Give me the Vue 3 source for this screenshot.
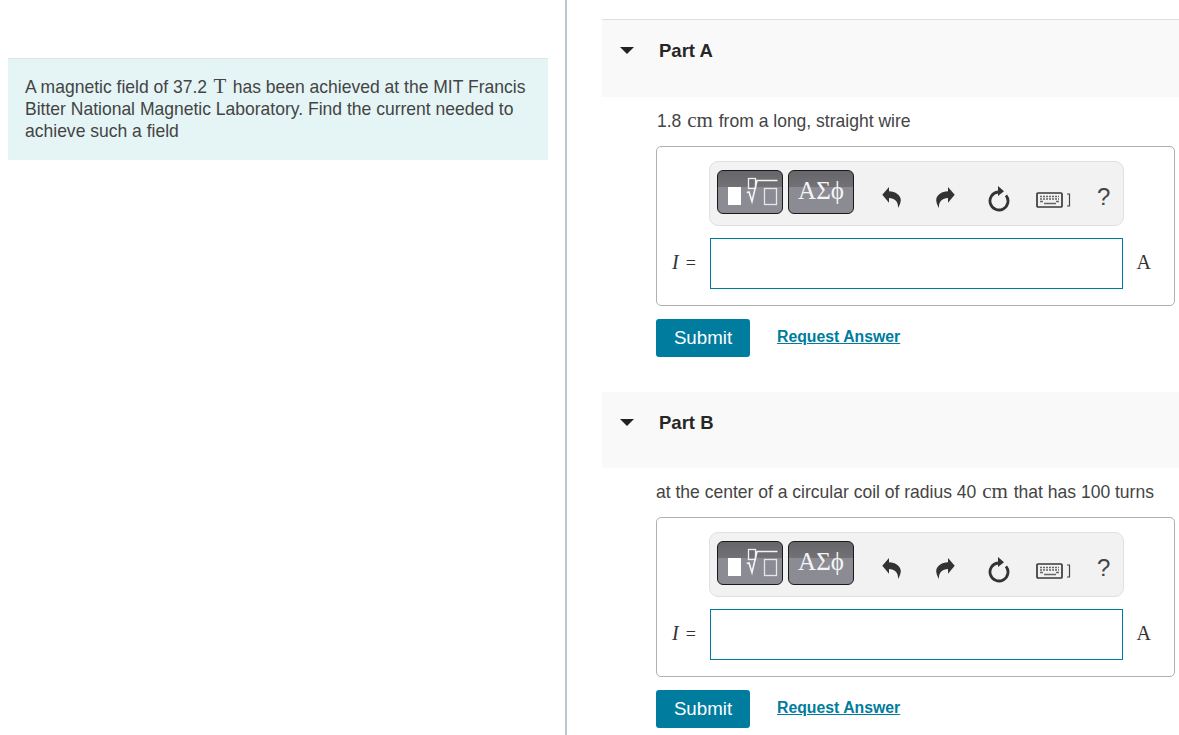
<template>
  <div class="page">
    <div class="left">
      <div class="intro">
        A magnetic field of 37.2 <span class="unit">T</span> has been achieved at the MIT Francis
        Bitter National Magnetic Laboratory. Find the current needed to achieve such a field
      </div>
    </div>
    <div class="right">
      <section v-for="part in parts" :key="part.name" class="part" :class="part.cls">
        <div class="part-head">
          <span class="caret"></span>
          <h2>{{ part.name }}</h2>
        </div>
        <p class="prompt" :class="part.promptCls">
          {{ part.before }} <span class="unit">cm</span> {{ part.after }}
        </p>
        <div class="answer-box">
          <div class="toolbar">
            <div class="tpl-btn first">
              <svg width="64" height="42" viewBox="0 0 64 42">
                <rect x="10" y="16" width="13" height="18" fill="#fff" />
                <rect x="30.500" y="7.500" width="7" height="10" fill="none" stroke="#f0f0f0" stroke-width="1.300" />
                <path d="M28.700 21.500 31 21 34 30.500 39 9.500H59.500" fill="none" stroke="#f4f4f4" stroke-width="1.600" />
                <rect x="46.500" y="17.500" width="12" height="16" fill="none" stroke="#e6e6e6" stroke-width="1.300" />
              </svg>
            </div>
            <div class="tpl-btn second">ΑΣϕ</div>
            <div class="tools">
              <svg class="t-undo" width="20" height="24" viewBox="0 0 20 24">
                <path d="M1.300 8.700 8 1V5.300C15 5.300 20.500 10 19.700 15 19.300 18 18 20.500 17 22 17.500 16 14 12 8 12V16.700Z" fill="#333" />
              </svg>
              <svg class="t-redo" width="20" height="24" viewBox="0 0 20 24">
                <path d="M18.700 8.700 12 1V5.300C5 5.300-.5 10 .3 15 .7 18 2 20.500 3 22 2.500 16 6 12 12 12V16.700Z" fill="#333" />
              </svg>
              <svg class="t-reset" width="26" height="28" viewBox="0 0 26 28">
                <path d="M12 8A9 9 0 1 0 20 11.300" fill="none" stroke="#333" stroke-width="2.800" />
                <path d="M12 2 18 7.300 12 12Z" fill="#333" />
              </svg>
              <svg class="t-keys" width="36" height="18" viewBox="0 0 36 18">
                <rect x="1" y="2" width="25" height="14" rx="1" fill="#f2f2f2" stroke="#3a3a3a" stroke-width="1.700" />
                <path d="M4 5.500h19M4 8h19" stroke="#666" stroke-width="1.500" stroke-dasharray="2 1" fill="none" />
                <path d="M4 10.500h3M20 10.500h3M8 12.500h12" stroke="#666" stroke-width="1.500" fill="none" />
                <path d="M31 3h2.500v12H31" fill="none" stroke="#444" stroke-width="1.200" />
              </svg>
              <span class="t-help">?</span>
            </div>
          </div>
          <div class="answer-row">
            <span class="var"><i>I</i><span class="eq">=</span></span>
            <div class="field"></div>
            <span class="answer-unit">A</span>
          </div>
        </div>
        <div class="actions">
          <button class="submit">Submit</button>
          <a class="reveal" href="#">Request Answer</a>
        </div>
      </section>
    </div>
  </div>
</template>

<script setup>
const parts = [
  { name: "Part A", cls: "part-a", promptCls: "indent", before: "1.8", after: "from a long, straight wire" },
  { name: "Part B", cls: "part-b", promptCls: "", before: "at the center of a circular coil of radius 40", after: "that has 100 turns" },
];
</script>

<style>
html, body { margin: 0; background: #fff; overflow: hidden; }
</style>

<style scoped>
.page {
  display: flex;
  height: 735px;
  overflow: hidden;
  font-family: "Liberation Sans", Arial, sans-serif;
  color: #444;
}
.left {
  width: 567px;
  flex: none;
  box-sizing: border-box;
  border-right: 2px solid #b8c8d4;
  padding: 58px 0 0 8px;
  margin-right: 35px;
}
.intro {
  width: 540px;
  height: 102px;
  box-sizing: border-box;
  padding: 17px 17px 0;
  background: #e5f5f6;
  border-top: 1px solid #dfe5e5;
  font-size: 17.530px;
  line-height: 22px;
}
.unit {
  font-family: "Liberation Serif", serif;
  font-size: 21px;
  line-height: 20px;
  margin: 0 1px;
}
.intro .unit {
  margin: 0 1.500px;
}
.right {
  flex: 1;
  min-width: 0;
  padding-top: 19px;
}
.part-head {
  display: flex;
  height: 78px;
  box-sizing: border-box;
  padding: 20px 0 0 18px;
  background: #f9f9f9;
  border-top: 1px solid #ddd;
}
.part-b {
  margin-top: 35px;
}
.part-b .part-head {
  height: 76px;
  border-top: 0;
}
.caret {
  width: 0;
  height: 0;
  margin-top: 7px;
  border-left: 7.500px solid transparent;
  border-right: 7.500px solid transparent;
  border-top: 7.500px solid #222;
}
h2 {
  margin: 0 0 0 24px;
  padding-left: 1px;
  font-size: 18.500px;
  line-height: 22px;
  font-weight: 700;
  color: #262626;
}
.prompt {
  margin: 13px 0 0 54px;
  font-size: 17.530px;
  line-height: 22px;
  height: 36px;
}
.prompt.indent {
  margin-left: 55px;
}
.answer-box {
  margin-left: 54px;
  width: 519px;
  height: 160px;
  box-sizing: border-box;
  border: 1px solid #b0b0b0;
  border-radius: 5px;
  padding: 14px 50px 0 52px;
}
.toolbar {
  display: flex;
  height: 65px;
  box-sizing: border-box;
  padding: 8px 0 0 7px;
  background: #f2f2f2;
  border: 1px solid #e0e0e0;
  border-radius: 9px;
}
.tpl-btn {
  height: 44px;
  box-sizing: border-box;
  border: 1px solid #1a1a1a;
  border-radius: 6px;
  background: linear-gradient(#66666a 0, #727276 38%, #8b8b94 39%, #8b8b94 100%);
}
.first {
  width: 66px;
  display: flex;
}
.second {
  width: 66px;
  margin-left: 5px;
  color: #f4f4f4;
  font-family: "Liberation Serif", serif;
  font-size: 25px;
  line-height: 40px;
  text-align: center;
}
.tools {
  flex: 1;
  display: flex;
  align-items: flex-start;
  margin-top: -8px;
  height: 63px;
}
.t-undo { margin: 24px 0 0 27px; }
.t-redo { margin: 24px 0 0 35px; }
.t-reset { margin: 22px 0 0 30px; }
.t-keys { margin: 29px 0 0 24px; }
.t-help {
  margin: 22px 0 0 25px;
  font-size: 24px;
  line-height: 26px;
  color: #444;
}
.answer-row {
  display: flex;
  align-items: center;
  margin: 12px 0 0 1px;
  position: relative;
}
.var {
  position: absolute;
  left: -38px;
  top: 13px;
  font-family: "Liberation Serif", serif;
  font-size: 20px;
  color: #333;
}
.eq {
  margin-left: 7px;
  font-size: 18px;
}
.field {
  width: 411px;
  height: 49px;
  border: 1px solid #007c9e;
  background: #fff;
  flex: none;
}
.answer-unit {
  position: absolute;
  right: -27px;
  top: 13px;
  font-family: "Liberation Serif", serif;
  font-size: 20px;
  color: #333;
}
.actions {
  display: flex;
  align-items: center;
  margin: 13px 0 0 54px;
}
.submit {
  width: 94px;
  height: 38px;
  border: 0;
  border-radius: 3px;
  background: #007c9e;
  color: #fff;
  font-family: inherit;
  font-size: 18.700px;
  padding: 0 0 1px;
}
.reveal {
  margin: 0 0 3px 27px;
  color: #007c9e;
  font-size: 15.800px;
  font-weight: 700;
  text-decoration: underline;
}
</style>
